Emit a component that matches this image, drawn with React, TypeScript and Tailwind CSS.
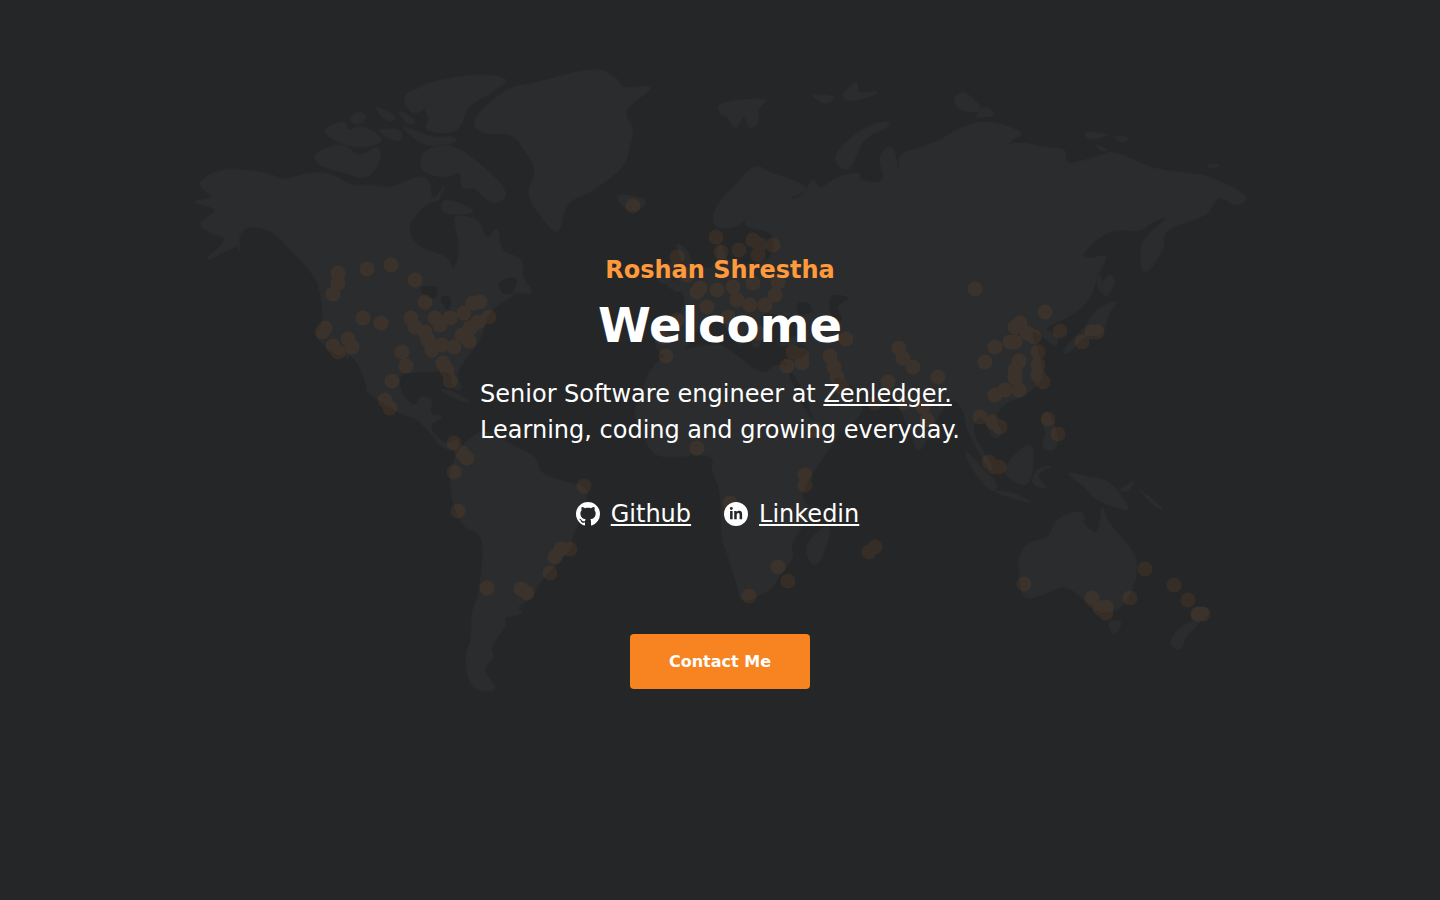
import { BsGithub } from "react-icons/bs";
import { FaLinkedinIn } from "react-icons/fa";

type P = number[];

const smooth = (p: P): string => {
  const n = p.length / 2;
  const g = (i: number) => [p[((i + n) % n) * 2], p[((i + n) % n) * 2 + 1]];
  let d = `M${g(0)[0]} ${g(0)[1]}`;
  for (let i = 0; i < n; i++) {
    const [a, b, c, e] = [g(i - 1), g(i), g(i + 1), g(i + 2)];
    const k = 5;
    d += `C${(b[0] + (c[0] - a[0]) / k).toFixed(1)} ${(b[1] + (c[1] - a[1]) / k).toFixed(1)} ${(c[0] - (e[0] - b[0]) / k).toFixed(1)} ${(c[1] - (e[1] - b[1]) / k).toFixed(1)} ${c[0]} ${c[1]}`;
  }
  return d + "Z";
};

const westLand: P[] = [
  // North America
  [195,202,210,197,200,183,223,170,263,173,280,179,307,173,327,175,347,185,363,185,385,187,407,178,420,180,425,198,436,186,430,200,422,203,410,213,402,230,413,247,437,257,445,268,450,250,447,227,447,217,467,220,477,237,487,230,493,250,510,260,512,277,520,292,503,293,500,297,480,313,470,340,450,370,452,388,445,388,440,373,420,372,395,375,395,393,407,405,413,397,423,400,423,413,433,417,423,427,437,443,448,440,447,450,433,446,423,434,410,420,393,413,373,400,360,390,343,360,330,353,313,337,318,320,315,290,305,270,287,250,270,233,250,227,238,235,238,250,233,247,207,259,223,240,210,233,200,223,213,210],
  // Arctic Canada
  [320,130,333,123,340,123,343,130,357,127,375,140,353,147,330,140],
  [313,153,337,145,353,155,370,148,373,160,360,177,337,172,323,168,314,163],
  [352,112,360,117,353,124,345,120],
  [370,108,380,111,388,118,380,120],
  [392,112,400,115,407,122,400,123],
  [373,130,392,130,393,140,382,138],
  [397,127,413,133,427,137,443,137,445,142,420,145,403,135],
  [410,88,433,80,470,75,495,80,480,93,460,107,447,130,420,130,420,117,410,95],
  [397,100,407,90,420,102,407,113],
  [413,160,423,148,447,148,480,173,495,193,483,203,467,190,462,188,453,187,450,173,437,177,418,172],
  [438,200,455,205,463,212,442,214,433,208],
  // Greenland
  [467,117,497,90,523,83,577,70,600,77,610,87,635,88,613,110,618,130,615,147,608,167,580,190,557,203,548,227,542,230,527,213,518,193,523,170,513,150,500,135,473,132],
  // Iceland
  [605,195,630,200,623,210,610,207],
  // Cuba
  [433,390,445,392,460,402,450,400],
  // South America
  [463,437,480,433,507,448,523,457,530,472,547,480,570,487,573,500,560,537,557,550,533,577,520,597,508,607,510,613,495,618,495,625,490,633,482,647,483,658,475,670,485,688,470,690,460,680,457,657,462,637,463,613,470,587,472,540,453,523,442,487,447,457],
];

const westWater: P[] = [
  [343,360,350,361,360,385,356,388],
  [413,288,428,287,427,298,418,296],
  [433,297,442,298,440,310,435,305],
  [490,282,505,278,502,292,492,293],
];

const eastLand: P[] = [
  // Eurasia
  [753,167,770,173,803,187,788,198,800,195,810,180,817,188,833,178,853,173,857,180,877,180,875,157,887,148,893,173,895,155,913,148,933,140,953,128,980,122,1010,132,1003,140,993,150,1007,143,1040,148,1053,150,1058,163,1083,157,1103,153,1137,167,1170,173,1193,177,1227,195,1220,205,1203,198,1193,212,1183,218,1157,228,1150,237,1148,250,1132,272,1127,253,1133,237,1152,218,1137,223,1127,230,1097,232,1073,252,1078,258,1093,257,1085,277,1080,293,1067,310,1047,322,1036,328,1046,336,1045,346,1034,338,1022,333,1030,360,1030,380,1015,395,997,403,987,417,992,433,985,437,973,417,967,423,967,437,980,460,982,470,974,458,960,430,955,410,945,400,935,410,925,430,913,450,905,435,895,410,890,395,875,395,850,393,858,408,845,425,820,435,805,405,790,375,778,345,795,335,765,335,755,350,745,330,738,345,720,320,705,320,695,335,680,355,660,350,660,320,680,315,685,295,670,285,700,270,715,265,720,245,732,262,765,260,770,235,745,225,752,205,738,225,715,225,718,205,735,185],
  // Britain, Ireland
  [678,245,690,255,695,285,675,290,685,270],
  [665,265,675,265,672,282,660,280],
  // Africa
  [665,358,685,350,720,345,735,355,760,372,775,365,790,372,800,405,815,425,835,430,825,450,807,477,800,497,807,513,790,543,790,557,777,577,767,590,743,600,737,587,727,553,722,537,720,493,713,473,712,458,697,455,667,457,650,445,638,413,645,395,650,375],
  [820,528,826,532,817,560,808,562,805,545],
  // Arctic islands
  [832,157,853,133,877,122,882,127,860,140,845,168],
  [810,95,830,97,822,103],
  [840,93,852,83,855,92,872,92,860,98,843,100],
  [947,100,957,93,973,110,955,110],
  [968,117,977,107,985,115,975,117],
  [1075,132,1095,135,1078,139],
  [1103,137,1115,138,1110,142],
  [1085,145,1095,150,1088,150],
  [1192,165,1203,165,1195,168],
  [720,105,740,100,763,100,757,110,757,123,748,127,743,117,735,128,727,117,720,113],
  // East Asia islands
  [1085,310,1103,302,1097,313,1090,333,1073,337,1057,353,1055,347,1073,327],
  [1085,273,1091,283,1095,293,1087,290],
  [1032,420,1037,413,1045,430,1045,448,1033,447,1035,433],
  [1097,275,1102,283,1094,296,1090,285],
  // Indonesia and Oceania
  [958,452,973,467,987,483,983,490,967,473],
  [997,467,1018,445,1023,460,1018,483,1003,480],
  [987,492,1003,493,1020,502,1003,498],
  [1023,477,1030,468,1040,467,1028,475,1035,487,1025,485],
  [1057,473,1077,477,1097,483,1115,507,1103,507,1083,498,1073,487],
  [1107,490,1120,482,1115,490],
  [1127,490,1147,507,1140,505],
  [1010,557,1020,543,1037,537,1047,520,1067,512,1073,518,1072,523,1085,532,1090,508,1097,523,1120,553,1123,573,1117,593,1103,610,1083,610,1070,597,1053,587,1037,593,1020,598,1013,593,1010,573],
  [1097,622,1108,622,1103,633,1098,630],
  [1184,622,1172,636,1166,648,1157,645,1160,634,1172,624],
  [1177,610,1187,607,1193,613,1180,624],
];

const eastWater: P[] = [
  [827,297,844,298,834,307,838,320,829,318],
  [796,303,806,304,808,312,796,314],
  [762,315,790,318,805,328,785,336,765,333],
  [723,343,760,348,800,345,798,358,760,358,735,352],
  [788,378,792,376,806,403,802,404],
  [835,378,852,390,845,392,832,384],
];

const dots: P = [
  338,273,338,283,333,294,367,269,391,265,415,280,425,302,325,328,322,332,348,339,352,347,333,346,338,352,363,318,381,323,411,318,415,327,425,332,435,318,450,318,464,313,480,302,473,303,489,317,478,322,470,328,462,335,469,341,454,347,440,325,428,340,432,350,442,345,443,363,447,370,450,381,402,352,406,366,392,381,385,400,390,408,
  454,443,462,453,467,458,454,472,458,511,487,588,521,589,527,593,584,486,561,549,570,549,555,557,550,573,
  633,206,716,237,721,252,739,250,753,240,760,245,773,245,758,255,677,257,687,275,700,288,697,292,717,290,733,287,753,283,778,282,775,295,737,300,750,305,765,305,707,307,677,320,662,337,728,317,759,333,666,356,846,339,793,352,802,355,802,363,787,366,830,356,834,367,837,377,842,387,899,348,903,358,913,367,888,382,938,377,875,403,904,403,923,407,927,420,697,448,815,430,805,475,805,485,730,503,
  778,567,788,581,749,596,875,547,869,552,
  985,362,995,347,1010,342,1015,342,1015,327,1020,323,1027,333,1034,337,1045,312,1060,331,1038,352,1038,365,1019,361,1015,370,1015,378,1038,375,1043,382,1019,390,1005,390,995,395,980,417,993,422,1000,427,1048,419,1058,434,1082,342,1092,332,1097,332,975,289,989,462,994,467,999,467,
  1024,584,1092,598,1100,608,1106,607,1106,613,1130,598,1145,569,1174,585,1188,600,1198,614,1203,614,
];

function WorldMap() {
  const cx: number[] = [];
  for (let i = 0; i < dots.length; i += 2) cx.push(i);
  return (
    <svg className="absolute inset-0 h-full w-full" viewBox="0 0 1440 900" aria-hidden="true">
      <g transform="translate(180 0) scale(1.033 1) translate(-180 0)">
        <g fill="#2b2c2d" stroke="#2b2c2d" strokeWidth="1" strokeLinejoin="round">
          {westLand.map((p, i) => (
            <path key={i} d={smooth(p)} />
          ))}
        </g>
        <g fill="#252627">
          {westWater.map((p, i) => (
            <path key={i} d={smooth(p)} />
          ))}
        </g>
      </g>
      <g transform="translate(720 0) scale(1.033 1) translate(-720 0)">
        <g fill="#2b2c2d" stroke="#2b2c2d" strokeWidth="1" strokeLinejoin="round">
          {eastLand.map((p, i) => (
            <path key={i} d={smooth(p)} />
          ))}
        </g>
        <g fill="#252627">
          {eastWater.map((p, i) => (
            <path key={i} d={smooth(p)} />
          ))}
        </g>
      </g>
      <g fill="#f78420" opacity="0.08">
        {cx.map((i) => (
          <circle key={i} cx={dots[i]} cy={dots[i + 1]} r="7.5" />
        ))}
      </g>
    </svg>
  );
}

export default function App() {
  return (
    <main className="relative min-h-[900px] overflow-hidden bg-[#252627] font-['DejaVu_Sans',sans-serif] text-white">
      <WorldMap />
      <div className="relative flex flex-col items-center pt-[252px]">
        <h2 className="text-2xl leading-9 font-bold text-[#ff9a3c]">Roshan Shrestha</h2>
        <h1 className="mt-[7px] text-5xl leading-[60px] font-bold">Welcome</h1>
        <p className="mt-[21px] text-[24px] leading-9">
          Senior Software engineer at <a className="underline" href="#">Zenledger.</a>
          <br />
          Learning, coding and growing everyday.
        </p>
        <div className="mt-12 mr-[5px] flex items-center gap-[33px] text-2xl leading-9">
          <a href="#" className="flex items-center gap-[11px]">
            <BsGithub className="h-6 w-6" />
            <span className="underline">Github</span>
          </a>
          <a href="#" className="flex items-center gap-[11px]">
            <span className="flex h-6 w-6 items-center justify-center rounded-full bg-white text-[#252627]">
              <FaLinkedinIn className="h-[14px] w-[14px]" />
            </span>
            <span className="underline">Linkedin</span>
          </a>
        </div>
        <a
          href="#"
          className="mt-[102px] flex h-[55px] w-[180px] items-center justify-center rounded-[4px] bg-[#f78420] text-base font-bold"
        >
          Contact Me
        </a>
      </div>
    </main>
  );
}
